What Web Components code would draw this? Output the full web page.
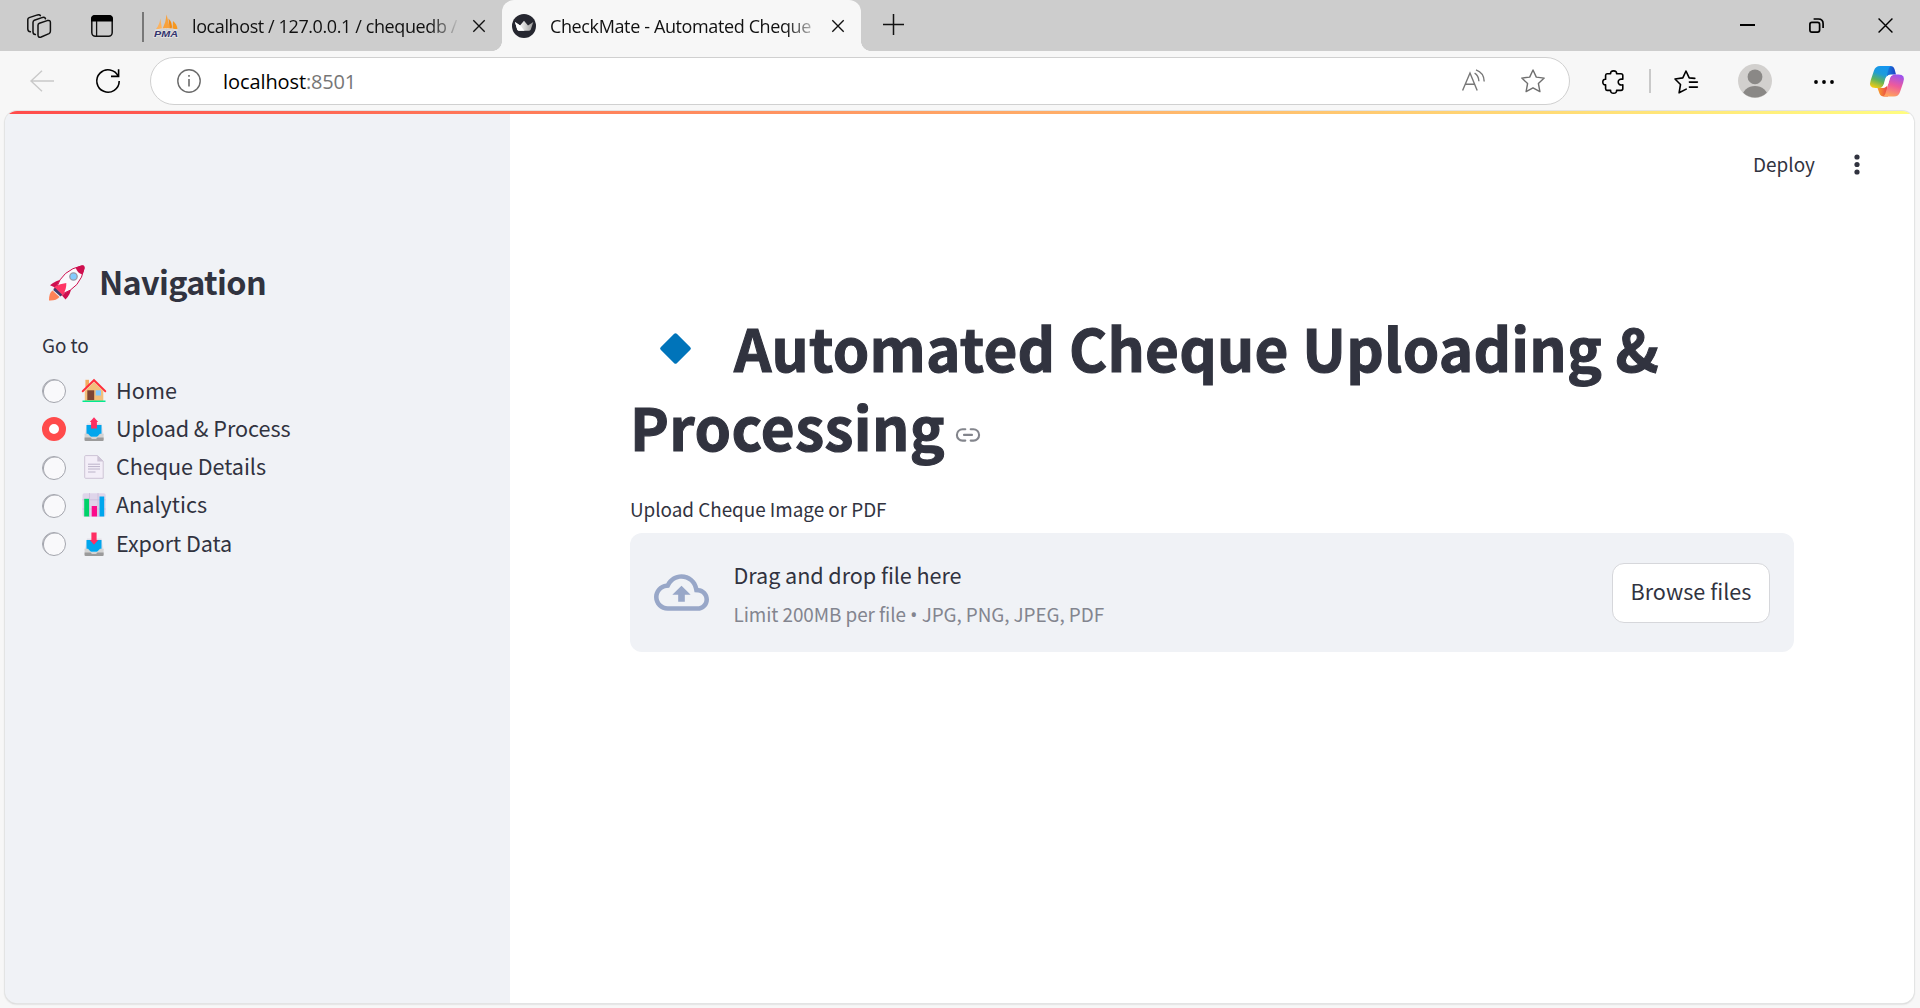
<!DOCTYPE html>
<html lang="en">
<head>
<meta charset="utf-8">
<title>CheckMate - Automated Cheque Processing</title>
<style>
html,body{margin:0;height:100%;overflow:hidden;background:#f7f7f7}
body{font-family:"Noto Sans CJK SC",sans-serif;color:#31333f}
</style>
</head>
<body>
<browser-window></browser-window>
<script>
const ICONS = {
workspaces:`<svg viewBox="0 0 24 24" fill="none" stroke="#111" stroke-width="1.5" stroke-linejoin="round" stroke-linecap="round"><path d="M12.4 9.2 20.2 6.6Q23.4 5.8 23.4 8.6V17.3Q23.4 18.8 22 19.6L14.2 23Q11 24 11 21V11.2Q11 9.8 12.4 9.2Z"/><path d="M8.4 20.6Q6 20.4 6 18V8.4Q6 7 7.4 6.2L15.6 3.4Q18 2.8 18.5 4.8"/><path d="M3.4 17.8Q.8 17.4.8 15V5.6Q.8 4.2 2.2 3.6L10.5.9Q12.8.4 13.4 1.6"/></svg>`,
tabs:`<svg viewBox="0 0 22 22"><rect x=".8" y=".8" width="20.4" height="20.4" rx="3.6" fill="none" stroke="#111" stroke-width="1.5"/><path d="M0 6.4V4Q0 0 4 0H18Q22 0 22 4V6.4Z" fill="#000"/><path d="M5.6 6V21" stroke="#111" stroke-width="1.3"/></svg>`,
pma:`<svg viewBox="0 0 26 24"><path d="M2 15Q5.5 11 6.3 4.5L8 15Z" fill="#fbb360"/><path d="M8.5 15Q12 8 12.6.5L16 15Z" fill="#f9a13a"/><path d="M14.5 4.5Q19 9 17.7 15H15.6Z" fill="#f38b12"/><path d="M19 7Q23 10 23.4 15H18.5Z" fill="#f7981f"/><path d="M1 16.2Q13 13 24 16.2" stroke="#dcdcdc" fill="none"/><text x="0" y="22.6" font-family="Liberation Sans" font-weight="700" font-style="italic" font-size="9" textLength="24" lengthAdjust="spacingAndGlyphs" fill="#35356e" stroke="#e4e4e4" stroke-width="1.4" paint-order="stroke">PMA</text></svg>`,
x:`<svg viewBox="0 0 12 12" fill="none" stroke="#111" stroke-width="1.35"><path d="M.3.3 11.7 11.7M11.7.3.3 11.7"/></svg>`,
winclose:`<svg viewBox="0 0 16 16" fill="none" stroke="#000" stroke-width="1.5"><path d="M.6.6 15.4 15.4M15.4.6.6 15.4"/></svg>`,
crown:`<svg viewBox="0 0 24 24"><defs><linearGradient id="cg"><stop offset=".2" stop-color="#fff"/><stop offset=".55" stop-color="#d4d4d4"/><stop offset="1" stop-color="#999"/></linearGradient></defs><circle cx="12" cy="12" r="12" fill="#262730"/><path d="M3 8 8 11.5 12 6.8 16 11.5 21.3 8 18.8 15.5Q18.2 16.8 16.8 16.8H7.2Q5.8 16.8 5.2 15.5Z" fill="url(#cg)"/><path d="M3 8 8.2 11.5 12.5 16.8H7.2Q5.8 16.8 5.2 15.5Z" fill="#fff"/></svg>`,
plus:`<svg viewBox="0 0 21 21" fill="none" stroke="#111" stroke-width="1.5"><path d="M10.5 0V21M0 10.5H21"/></svg>`,
min:`<svg viewBox="0 0 15 2"><path d="M0 1H15" stroke="#000" stroke-width="2"/></svg>`,
restore:`<svg viewBox="0 0 15 15" fill="none" stroke="#000" stroke-width="1.7"><rect x=".9" y="4.4" width="9.7" height="9.7" rx="2"/><path d="M4.6 1H9.4Q14.1 1 14.1 5.7V10" /></svg>`,
back:`<svg viewBox="0 0 24 22" fill="none" stroke="#c9c9c9" stroke-width="1.4"><path d="M24 11H1M12 .8 1 11 12 21.2"/></svg>`,
refresh:`<svg viewBox="0 0 24 24" fill="none" stroke="#000" stroke-width="1.6"><path d="M22.3 7.6A11.2 11.2 0 1 0 23.2 12"/><path d="M22.6.3V7.4H15"/></svg>`,
info:`<svg viewBox="0 0 24 24" fill="none" stroke="#6b6b6b" stroke-width="1.4"><circle cx="12" cy="12" r="11.2"/><path d="M12 10V17.4M12 6V7.8" stroke-width="1.6"/></svg>`,
read:`<svg viewBox="0 0 23 22" fill="none" stroke="#777" stroke-width="1.4"><path d="M.6 21.5 8 4 15.2 21.5M3 15.2H12.8M12.6 4.2Q16.6 6.6 16.9 12.2M14 .9Q22 3.7 22.2 12.6"/></svg>`,
star:`<svg viewBox="0 0 24 24" fill="none" stroke="#6f6f6f" stroke-width="1.4" stroke-linejoin="round"><path d="M12 1 15.3 8.1 23.2 9.1 17.4 14.5 18.9 22.6 12 18.8 5.1 22.6 6.6 14.5.8 9.1 8.7 8.1Z"/></svg>`,
puzzle:`<svg viewBox="0 0 22 24" fill="none" stroke="#000" stroke-width="1.6" stroke-linejoin="round"><path d="M5 3.8H8.6C8.4 2 9.5.9 11.6.9S14.8 2 14.6 3.8H19Q20.8 3.8 20.8 5.6V9.3C18 8.6 16.2 9.8 16.2 12S18 15.5 20.8 14.8V18.6Q20.8 20.4 19 20.4H14.6C14.8 22.2 13.7 23.2 11.6 23.2S8.4 22.2 8.6 20.4H5Q3.6 20.4 3.6 18.6V14.8C1.8 15 .8 14 .8 12S1.8 9.1 3.6 9.3V5.6Q3.6 3.8 5 3.8Z"/></svg>`,
fav:`<svg viewBox="0 0 24 24" fill="none" stroke="#000" stroke-width="1.6" stroke-linejoin="round" stroke-linecap="round"><path d="M20.8 8.4 15.2 7.9 12 1 8.8 7.9 1 9 6.5 14.5 5.1 22.8 12.2 19.1M15.4 12.1H23.4M15.4 17.1H23.4"/></svg>`,
avatar:`<svg viewBox="0 0 34 34"><defs><clipPath id="ac"><circle cx="17" cy="17" r="16.6"/></clipPath></defs><circle cx="17" cy="17" r="17" fill="#d2d0ce"/><circle cx="17" cy="12.8" r="7.4" fill="#8a8886"/><ellipse cx="17" cy="33" rx="12.8" ry="11" fill="#8a8886" clip-path="url(#ac)"/></svg>`,
dots:`<svg viewBox="0 0 20 4"><circle cx="2" cy="2" r="1.9"/><circle cx="10" cy="2" r="1.9"/><circle cx="18" cy="2" r="1.9"/></svg>`,
copilot:`<svg viewBox="0 0 34 31"><defs><linearGradient id="a" x1=".6" y1="0" x2=".25" y2="1"><stop offset="0" stop-color="#1496f0"/><stop offset=".35" stop-color="#1d9cd8"/><stop offset=".65" stop-color="#5fb35c"/><stop offset="1" stop-color="#f4cb10"/></linearGradient><linearGradient id="b" x1=".7" y1="0" x2=".4" y2="1"><stop offset="0" stop-color="#9b52f0"/><stop offset=".5" stop-color="#ee5a9c"/><stop offset="1" stop-color="#ffa35c"/></linearGradient><linearGradient id="c" x1="0" x2="1"><stop offset="0" stop-color="#1687e0"/><stop offset="1" stop-color="#1b3fc4"/></linearGradient><linearGradient id="d" x1="0" x2="1"><stop offset="0" stop-color="#f9a32a"/><stop offset="1" stop-color="#e8404a"/></linearGradient></defs><path d="M16 0H20.5Q23.5 0 24.5 3L26 8.5H21Q17.5 8.5 16.5 12Z" fill="url(#c)"/><path d="M18 30.5H14Q10.5 30.5 9.5 27.5L7.5 22H12.5Q16 22 17 18.5Z" fill="url(#d)"/><path d="M21.5 0H10Q5.5 0 4 4.5L.8 14Q-2 22 5.5 22H9.5Q12.8 22 14 18.5L18.3 4Q19.2.3 21.5 0Z" fill="url(#a)"/><path d="M12.5 30.5H24Q28.5 30.5 30 26L33.2 16.5Q36 8.5 28.5 8.5H24.5Q21.2 8.5 20 12L15.7 26.5Q14.8 30.2 12.5 30.5Z" fill="url(#b)"/><path d="M15 13.5Q16.3 9 20.5 9H23Q20.5 9.5 19.7 12.4L18.5 17Q17.2 21.5 13 21.7H11Q13.3 20.4 14 17.5Z" fill="#fff"/></svg>`,
rocket:`<svg viewBox="0 0 36 36"><path d="M3.5 25.5Q0 27.5 0 35.5Q7 36 10.5 32Z" fill="#ff8257"/><path d="M14 14.5Q7 15 1 20.2L6 22.5ZM22 22.5Q22 29 16.5 34.5L13 30.5Z" fill="#ce0e4e"/><path d="M7.3 23Q13 5 33 .7Q35.5.4 35.3 3Q31.5 23 13 29Z" fill="#faf8fc" stroke="#ce0e4e" stroke-width="1"/><path d="M26.7 2.7Q33 0 35 .8Q36 4.5 33.2 9.6Q28.5 8 26.7 2.7Z" fill="#ce0e4e"/><path d="M5.5 22Q11 18.5 17.3 18Q17.6 24 14 29.5L12 31 4.5 24Z" fill="#ff3565"/><path d="M6 22.7 13.2 29.7 11.5 31.5 4.2 25Z" fill="#433b6b"/><circle cx="24.5" cy="11.5" r="3.7" fill="#83cbff" stroke="#9a9aa5" stroke-width="1.3"/></svg>`,
house:`<svg viewBox="0 0 24 24"><path d="M3.4.8H7V8H3.4Z" fill="#f3ad61"/><path d="M2.8 12 12 3 21.3 12V22H2.8Z" fill="#f3c07b"/><path d="M.7 12.3 12 1.2 23.3 12.3" fill="none" stroke="#ff2f3a" stroke-width="1.9" stroke-linecap="round"/><path d="M5.3 11.3H12.2V21H5.3Z" fill="#7d4533"/><path d="M13.7 11.3H19V16.5H13.7Z" fill="#83cbff"/><path d="M.5 21.5H23.5V23H.5Z" fill="#00ea90"/></svg>`,
upload:`<svg viewBox="0 0 24 24"><path d="M5 6.5H19.5L21.6 18H2.6Z" fill="#e1dfe8"/><path d="M4.5 8H19.5V17L15.5 19.7H8.5L4.5 17Z" fill="#00a6ed"/><path d="M2.6 16.8H6L9 20H15L18 16.8H21.6V23.5H2.6Z" fill="#d3d3d3"/><path d="M2.6 20.5H8.5L10 22H14L15.5 20.5H21.6V23Q21.6 24 20.6 24H3.6Q2.6 24 2.6 23Z" fill="#9b9b9b"/><path d="M12 .2 16.2 5H14.9V11.5H9.1V5H7.8Z" fill="#ff2e62"/></svg>`,
page:`<svg viewBox="0 0 24 24"><path d="M3.7.6H15.5L21.2 6.2V23.3H3.7Q2.7 23.3 2.7 22.3V1.6Q2.7.6 3.7.6Z" fill="#f3eef8" stroke="#cdc4d6" stroke-width="1"/><path d="M15.3.6V6.4H21.3Z" fill="#cdc4d6"/><path d="M6 9.2H18M6 11.6H18M6 14H18M6 17H13.5" stroke="#b6abc4" stroke-width=".9"/></svg>`,
chart:`<svg viewBox="0 0 24 24"><rect x=".5" y=".2" width="23.2" height="23.6" rx="1.8" fill="#dfd5ea"/><path d="M7.5 0V24M16 0V24M.5 6.8H23.7M.5 16H23.7" stroke="#cabcd9" stroke-width=".8"/><path d="M2.2 5.8H7V23.5H2.2Z" fill="#00d26a"/><path d="M9.7 13H15V23.5H9.7Z" fill="#fc0b8b"/><path d="M17.5 3.5H22.2V23.5H17.5Z" fill="#00a6ed"/></svg>`,
download:`<svg viewBox="0 0 24 24"><path d="M5 6.5H19.5L21.6 18H2.6Z" fill="#e1dfe8"/><path d="M4.5 8H19.5V17L15.5 19.7H8.5L4.5 17Z" fill="#00a6ed"/><path d="M2.6 16.8H6L9 20H15L18 16.8H21.6V23.5H2.6Z" fill="#d3d3d3"/><path d="M2.6 20.5H8.5L10 22H14L15.5 20.5H21.6V23Q21.6 24 20.6 24H3.6Q2.6 24 2.6 23Z" fill="#9b9b9b"/><path d="M12 12.8 16.2 8H14.6V.5H9.4V8H7.8Z" fill="#ff2e62"/></svg>`,
diamond:`<svg viewBox="0 0 31 31"><path d="M14.2.8Q15.5-.5 16.8.8L30.3 14.2Q31.6 15.5 30.3 16.8L16.8 30.2Q15.5 31.5 14.2 30.2L.7 16.8Q-.6 15.5.7 14.2Z" fill="#0074ba"/></svg>`,
link:`<svg viewBox="0 0 24 14" fill="none" stroke="#83858c" stroke-width="2.1" stroke-linecap="round"><path d="M9.3 1.2H6.6A5.7 5.7 0 0 0 6.6 12.6H9.3M14.7 1.2H17.4A5.7 5.7 0 0 1 17.4 12.6H14.7M8 6.9H16"/></svg>`,
cloud:`<svg viewBox="0 4 24 16"><path fill="#98a7c8" d="M19.35 10.04C18.67 6.59 15.64 4 12 4 9.11 4 6.6 5.64 5.35 8.04 2.34 8.36 0 10.91 0 14c0 3.31 2.69 6 6 6h13c2.76 0 5-2.24 5-5 0-2.64-2.05-4.78-4.65-4.96zM19 18H6c-2.21 0-4-1.79-4-4 0-2.05 1.53-3.76 3.56-3.97l1.07-.11.5-.95C8.08 7.14 9.94 6 12 6c2.62 0 4.88 1.86 5.39 4.43l.3 1.5 1.53.11c1.56.1 2.78 1.41 2.78 2.96 0 1.65-1.35 3-3 3zM8 13h2.55v3h2.9v-3H16l-4-4z"/></svg>`,
kebab:`<svg viewBox="0 0 6 21" fill="#31333f"><circle cx="3" cy="3" r="2.6"/><circle cx="3" cy="10.5" r="2.6"/><circle cx="3" cy="18" r="2.6"/></svg>`
};

class Base extends HTMLElement {
  connectedCallback() {
    if (this.shadowRoot) return;
    this.attachShadow({mode:'open'}).innerHTML = `<style>${this.css()}</style>${this.html()}`;
    this.ready();
  }
  css(){return ''} html(){return ''} ready(){}
}

/* Inline vector icon: name, w, h, and ml / mt for its margins. */
customElements.define('ui-icon', class extends Base {
  css(){const g=n=>this.getAttribute(n)||0; return `:host{display:block;flex:none;width:${g('w')}px;height:${g('h')}px;margin-left:${g('ml')}px;margin-top:${g('mt')}px}svg{display:block;width:100%;height:100%;overflow:visible}`}
  html(){return ICONS[this.getAttribute('name')]}
});

/* One line of text whose tracking adapts to a set width. */
customElements.define('fit-text', class extends Base {
  css(){return `:host{display:block;flex:none;white-space:pre}span{display:inline-block;white-space:pre}`}
  html(){return `<span><slot></slot></span>`}
  ready(){
    const s=this.shadowRoot.querySelector('span'), w=+this.getAttribute('w');
    const n=[...this.textContent].length;
    s.style.letterSpacing=((w-s.getBoundingClientRect().width)/n)+'px';
  }
});

customElements.define('tab-strip', class extends Base {
  css(){return `:host{display:flex;align-items:center;height:51px;background:#cdcdcd;font-family:"Open Sans",sans-serif;font-size:18px;line-height:26px;color:#111}
  .bar{width:1.5px;height:30px;background:#777;margin:2px 0 0 29px}
  .t1{margin-left:12.5px;width:265px;overflow:hidden;-webkit-mask:linear-gradient(90deg,#000 238px,transparent 268px)}
  .active{box-sizing:border-box;display:flex;align-items:center;width:359px;height:51px;margin-left:17px;padding-left:10px;background:#f7f7f7;border-radius:12px 12px 0 0;position:relative}
  .active:before,.active:after{content:"";position:absolute;bottom:0;width:10px;height:10px}
  .active:before{left:-10px;background:radial-gradient(circle at 0 0,transparent 9.6px,#f7f7f7 10.2px)}
  .active:after{right:-10px;background:radial-gradient(circle at 100% 0,transparent 9.6px,#f7f7f7 10.2px)}
  .t2{margin-left:14px;width:268px;overflow:hidden;-webkit-mask:linear-gradient(90deg,#000 236px,transparent 272px)}
  .sp{flex:1}`}
  html(){return `<ui-icon name="workspaces" w="24" h="24" ml="27"></ui-icon><ui-icon name="tabs" w="22" h="22" ml="40" mt="1"></ui-icon><div class="bar"></div>
  <ui-icon name="pma" w="26" h="24" ml="10" mt="1"></ui-icon><div class="t1"><fit-text w="265">localhost / 127.0.0.1 / chequedb /</fit-text></div><ui-icon name="x" w="12" h="12" ml="16" mt="1"></ui-icon>
  <div class="active"><ui-icon name="crown" w="24" h="24" mt="1"></ui-icon><div class="t2"><fit-text w="261">CheckMate - Automated Cheque</fit-text></div><ui-icon name="x" w="12" h="12" ml="14" mt="1"></ui-icon></div>
  <ui-icon name="plus" w="21" h="21" ml="22" mt="-2"></ui-icon><div class="sp"></div>
  <ui-icon name="min" w="15" h="2" mt="-1"></ui-icon><ui-icon name="restore" w="15" h="15" ml="54"></ui-icon><ui-icon name="winclose" w="15" h="15" ml="54" style="margin-right:27px"></ui-icon>`}
});

customElements.define('tool-bar', class extends Base {
  css(){return `:host{display:flex;align-items:center;height:60px;background:#f7f7f7}
  .addr{box-sizing:border-box;display:flex;align-items:center;width:1420px;height:48px;margin-left:30px;border:1.5px solid #d0d0d0;border-radius:24px;background:#fff;font:20px/28px "Open Sans",sans-serif;color:#000}
  .addr fit-text{margin-top:1px}
  .addr fit-text:nth-of-type(1){margin-left:22px}
  .port{color:#767676}.sp{flex:1}.bar{width:2px;height:24px;margin-left:25px;background:#c9c9c9}`}
  html(){return `<ui-icon name="back" w="24" h="22" ml="30" mt="-1"></ui-icon><ui-icon name="refresh" w="24" h="24" ml="42"></ui-icon>
  <div class="addr"><ui-icon name="info" w="24" h="24" ml="26"></ui-icon><fit-text w="83">localhost</fit-text><fit-text class="port" w="50">:8501</fit-text><div class="sp"></div><ui-icon name="read" w="23" h="22" mt="-2"></ui-icon><ui-icon name="star" w="24" h="24" ml="36" style="margin-right:24px"></ui-icon></div>
  <ui-icon name="puzzle" w="22" h="24" ml="32" mt="2"></ui-icon><div class="bar"></div><ui-icon name="fav" w="24" h="24" ml="23" mt="2"></ui-icon><ui-icon name="avatar" w="34" h="34" ml="40"></ui-icon><ui-icon name="dots" w="20" h="4" ml="42" mt="1"></ui-icon><ui-icon name="copilot" w="34" h="31" ml="36"></ui-icon>`}
});

customElements.define('nav-option', class extends Base {
  css(){return `:host{display:flex;align-items:center;height:38.25px;font-size:21.6px;line-height:38px}
  i{box-sizing:border-box;width:24px;height:24px;border-radius:50%;border:1.5px solid #a3a5ad;background:#f9f9fb;box-shadow:inset 1px .6px 0 #a3a5ad}
  :host([checked]) i{border:7.5px solid #ff4b4b;background:#fff;box-shadow:none}
  fit-text{margin-left:10px;margin-top:-3px}`}
  html(){return `<i></i><ui-icon name="${this.getAttribute('icon')}" w="24" h="24" ml="16" mt="-1"></ui-icon><fit-text w="${this.getAttribute('w')}">${this.getAttribute('label')}</fit-text>`}
});

customElements.define('side-bar', class extends Base {
  css(){return `:host{display:block;box-sizing:border-box;width:505px;flex:none;background:#f0f2f6;padding:146px 0 0 37px}
  h2{display:flex;align-items:center;margin:0;height:44px;font-size:32.4px;line-height:44px;font-weight:700}
  h2 fit-text{margin-left:14px;margin-top:-2px}
  .goto{height:32px;margin-top:25px;font-size:18.9px;line-height:32px}
  .list{margin-top:11px}`}
  html(){return `<h2><ui-icon name="rocket" w="36" h="36" ml="7" mt="1"></ui-icon><fit-text w="167">Navigation</fit-text></h2>
  <div class="goto"><fit-text w="46.5">Go to</fit-text></div>
  <div class="list"><nav-option icon="house" label="Home" w="61"></nav-option><nav-option checked icon="upload" label="Upload &amp;amp; Process" w="174.5"></nav-option><nav-option icon="page" label="Cheque Details" w="150"></nav-option><nav-option icon="chart" label="Analytics" w="91"></nav-option><nav-option icon="download" label="Export Data" w="116"></nav-option></div>`}
});

customElements.define('file-uploader', class extends Base {
  css(){return `:host{display:block}
  .label{height:32px;font-size:18.9px;line-height:32px}
  .zone{box-sizing:border-box;display:flex;align-items:center;height:119px;margin-top:8px;padding:0 24px;border-radius:12px;background:#f0f2f6}
  .copy{margin:3px 0 0 24.5px;flex:1}
  .a{font-size:21.6px;line-height:38px;height:39px}.b{font-size:18.9px;line-height:38px;height:38px;color:#83858f}
  .b b{font:400 20px/1 "Open Sans",sans-serif}
  button{box-sizing:border-box;display:flex;justify-content:center;width:158px;height:60px;padding:0;border:1.5px solid #d6d7db;border-radius:12px;background:#fff;color:#31333f;font:21.6px/53px "Noto Sans CJK SC",sans-serif}`}
  html(){return `<div class="label"><fit-text w="256.5">Upload Cheque Image or PDF</fit-text></div>
  <div class="zone"><ui-icon name="cloud" w="55" h="37"></ui-icon><div class="copy"><div class="a"><fit-text w="228">Drag and drop file here</fit-text></div><div class="b"><fit-text w="370.5">Limit 200MB per file <b>•</b> JPG, PNG, JPEG, PDF</fit-text></div></div><button><fit-text w="121">Browse files</fit-text></button></div>`}
});

customElements.define('main-view', class extends Base {
  css(){return `:host{display:block;flex:1;background:#fff}
  header{display:flex;align-items:center;height:36px;padding:32px 54px 0 0;justify-content:flex-end;font-size:18.9px;line-height:36px}
  main{padding:127px 120px 0}
  h1{margin:0;font-size:58.4px;line-height:79px;font-weight:700;-webkit-text-stroke:1.1px #31333f}
  .l{display:flex;align-items:center;height:79px}
  .l fit-text{margin-top:-4px}
  .l1 fit-text{margin-left:43px}
  file-uploader{margin-top:26px}`}
  html(){return `<header><fit-text w="62">Deploy</fit-text><ui-icon name="kebab" w="6" h="21" ml="39" mt="1"></ui-icon></header>
  <main><h1><div class="l l1"><ui-icon name="diamond" w="31" h="31" ml="30"></ui-icon><fit-text w="925">Automated Cheque Uploading &amp;</fit-text></div><div class="l"><fit-text w="315">Processing</fit-text><ui-icon name="link" w="24" h="14" ml="11" mt="14"></ui-icon></div></h1><file-uploader></file-uploader></main>`}
});

customElements.define('browser-window', class extends Base {
  css(){return `:host{display:flex;flex-direction:column;width:1920px;height:1008px;background:#f7f7f7}
  .page{flex:1;display:flex;flex-direction:column;margin:0 6px 5px 5px;border-radius:12px;overflow:hidden;box-shadow:0 0 0 1px #e3e4e4,0 1px 2px #bbb}
  .deco{height:3px;background:linear-gradient(90deg,#ff4b4b,#fffd80)}
  .cols{flex:1;display:flex}`}
  html(){return `<tab-strip></tab-strip><tool-bar></tool-bar><div class="page"><div class="deco"></div><div class="cols"><side-bar></side-bar><main-view></main-view></div></div>`}
});
</script>
</body>
</html>
